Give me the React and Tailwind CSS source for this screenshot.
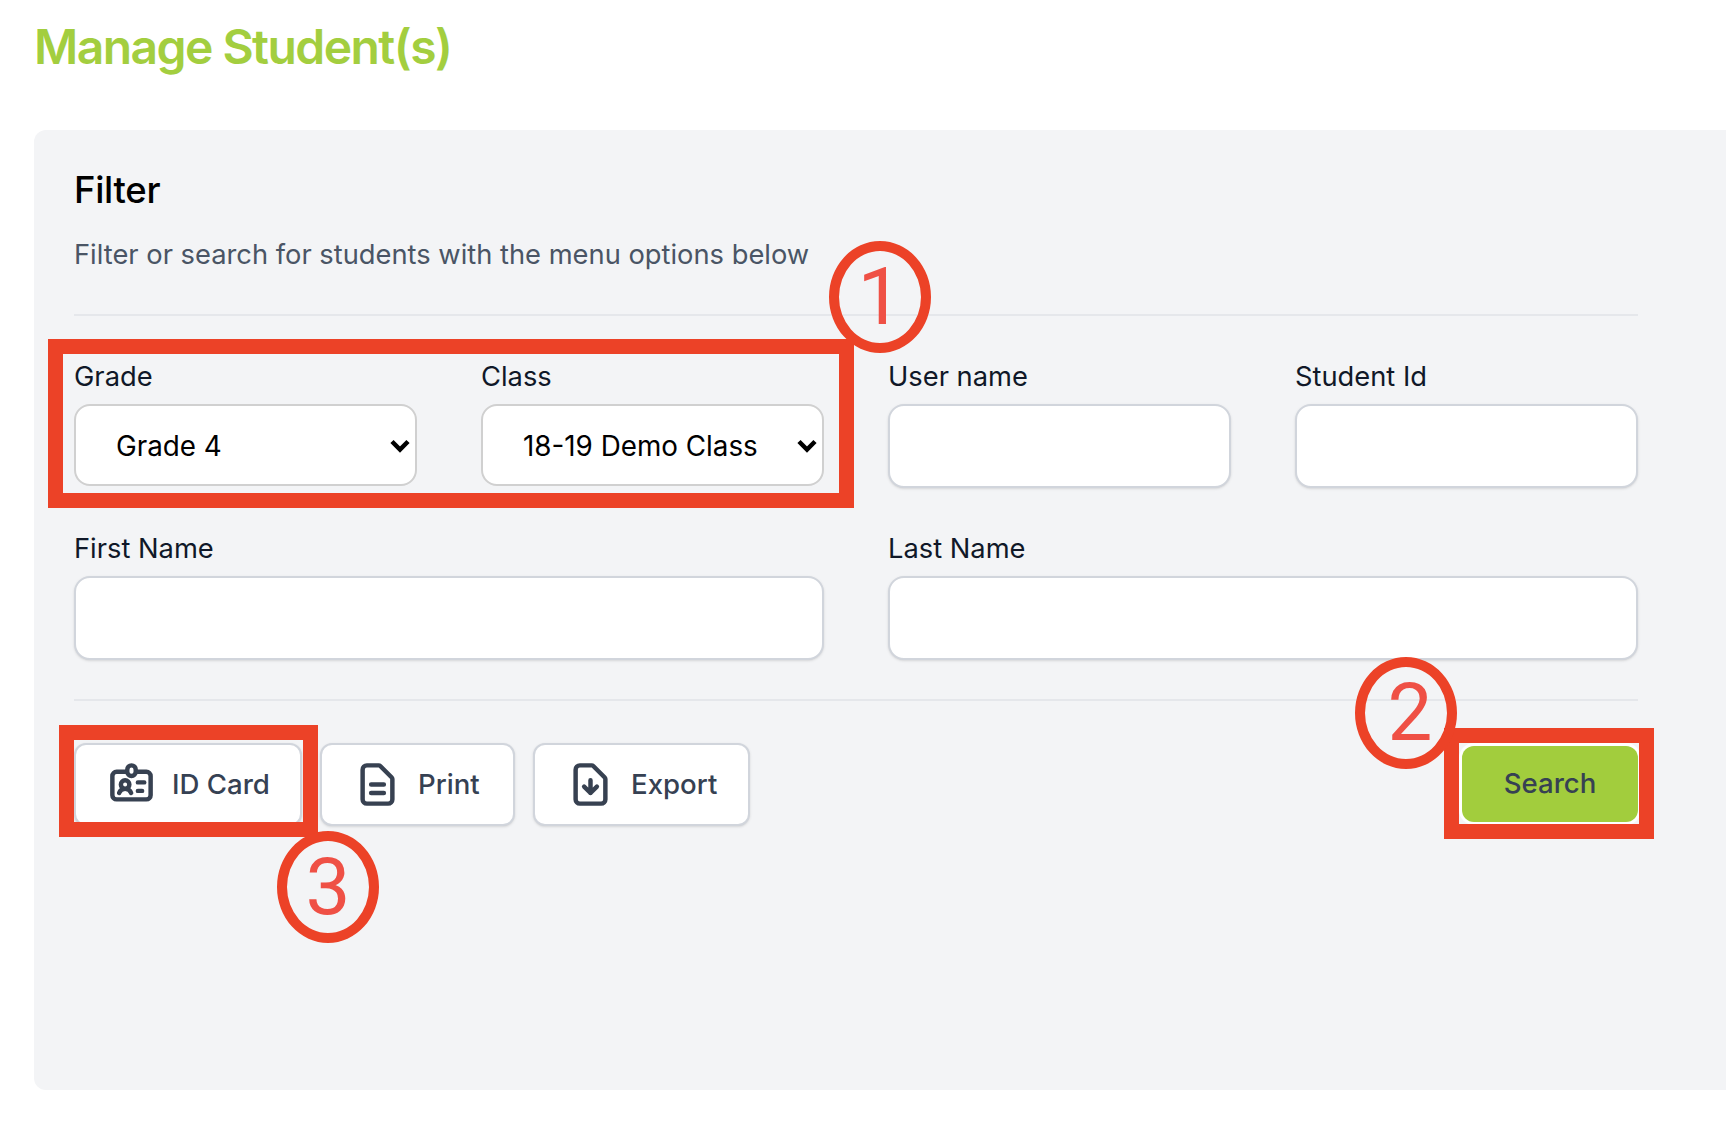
const Chevron = () => (
  <svg className="absolute right-[7px] top-[35px] w-[20px] h-[14px] pointer-events-none" viewBox="0 0 20 14" fill="none" stroke="#000" strokeWidth="4.5">
    <path d="M2 2.5l8 8 8-8" />
  </svg>
);

const Field = ({ label, className = "" }) => (
  <div className={className}>
    <label className="block h-10 pt-[1px] leading-10 text-[27.3px] text-gray-900">{label}</label>
    <input className="mt-2 block w-full h-[84px] rounded-2xl border-2 border-gray-300 bg-white shadow-sm" />
  </div>
);

const SelectField = ({ label, value }) => (
  <div>
    <label className="block h-10 pt-[1px] leading-10 text-[27.3px] text-gray-900">{label}</label>
    <div className="relative mt-2 h-[84px]">
      <select defaultValue={value} className="block w-full h-[82px] appearance-none rounded-2xl border-2 border-[#d0d0d0] bg-white pl-[40px] pt-[4px] text-[27.8px] text-black">
        <option>{value}</option>
      </select>
      <Chevron />
    </div>
  </div>
);

const Icon = ({ d }) => (
  <svg className="w-[51px] h-[51px] shrink-0" viewBox="0 0 24 24" fill="none" stroke="#374151" strokeWidth="2.1" strokeLinecap="round" strokeLinejoin="round">
    <path d={d} />
  </svg>
);

const ActionButton = ({ d, label, w }) => (
  <button className={`flex items-center h-[83px] rounded-xl border-2 border-gray-300 bg-white pl-[30px] gap-[15px] text-[27.6px] font-medium text-gray-700 shadow-sm ${w}`}>
    <Icon d={d} />
    <span>{label}</span>
  </button>
);

const Box = ({ className }) => <div className={`absolute border-[15px] border-[#ec4227] pointer-events-none ${className}`} />;

const Badge = ({ n, className }) => (
  <div className={`absolute flex items-center justify-center w-[102px] h-[112px] rounded-[50%] border-[10px] border-[#ec4227] text-[80px] leading-none text-[#ef5045] ${className}`} style={{ fontFamily: 'Roboto, sans-serif' }}>
    {n}
  </div>
);

export default function App() {
  return (
    <div className="relative h-[1136px] overflow-hidden bg-white" style={{ fontFamily: 'Inter, sans-serif' }}>
      <h1 className="pl-[34px] pt-[18px] h-[130px] text-[48px] leading-[58px] font-semibold tracking-[-1.55px] text-[#a3ce3f]">Manage Student(s)</h1>
      <div className="ml-[34px] h-[960px] rounded-l-xl bg-gray-100 pl-[40px] pr-[88px] pt-[40px]">
        <h2 className="h-10 text-[36.5px] leading-10 font-[450] tracking-[-0.3px] text-black">Filter</h2>
        <p className="mt-[27px] h-9 text-[27.3px] leading-9 text-gray-600">Filter or search for students with the menu options below</p>
        <hr className="mt-[41px] border-t-2 border-gray-200" />
        <div className="mt-[40px] grid grid-cols-4 gap-x-16 gap-y-[40px]">
          <SelectField label="Grade" value="Grade 4" />
          <SelectField label="Class" value="18-19 Demo Class" />
          <Field label="User name" />
          <Field label="Student Id" />
          <Field label="First Name" className="col-span-2" />
          <Field label="Last Name" className="col-span-2" />
        </div>
        <hr className="mt-[39px] border-t-2 border-gray-200" />
        <div className="mt-[42px] flex items-start justify-between">
          <div className="flex gap-[18px]">
            <ActionButton w="w-[228px]" label="ID Card" d="M10 6H5a2 2 0 00-2 2v9a2 2 0 002 2h14a2 2 0 002-2V8a2 2 0 00-2-2h-5m-4 0V5a2 2 0 114 0v1m-4 0a2 2 0 104 0m-5 8a2 2 0 100-4 2 2 0 000 4zm0 0c1.306 0 2.417.835 2.83 2M9 14a3.001 3.001 0 00-2.83 2M15 11h3m-3 4h2" />
            <ActionButton w="w-[195px]" label="Print" d="M9 12h6m-6 4h6m2 5H7a2 2 0 01-2-2V5a2 2 0 012-2h5.586a1 1 0 01.707.293l5.414 5.414a1 1 0 01.293.707V19a2 2 0 01-2 2z" />
            <ActionButton w="w-[217px]" label="Export" d="M12 10v6m0 0l-3-3m3 3l3-3m2 8H7a2 2 0 01-2-2V5a2 2 0 012-2h5.586a1 1 0 01.707.293l5.414 5.414a1 1 0 01.293.707V19a2 2 0 01-2 2z" />
          </div>
          <button className="mt-[3px] w-[176px] h-[76px] rounded-xl bg-[#a2cd3d] text-[27.6px] font-medium text-gray-700 shadow-[0_0_0_3px_#fff]">Search</button>
        </div>
      </div>

      <Box className="left-[48px] top-[339px] w-[806px] h-[169px]" />
      <Box className="left-[59px] top-[725px] w-[259px] h-[112px]" />
      <Box className="left-[1444px] top-[728px] w-[210px] h-[111px]" />
      <Badge n="1" className="left-[829px] top-[241px]" />
      <Badge n="2" className="left-[1355px] top-[657px] pl-[8px]" />
      <Badge n="3" className="left-[277px] top-[831px]" />
    </div>
  );
}
